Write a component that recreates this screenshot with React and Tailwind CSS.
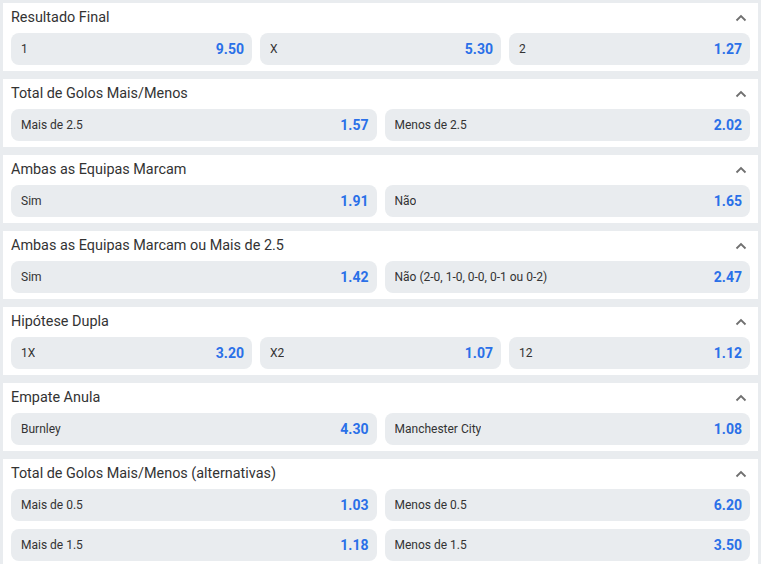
import React from "react";

const markets = [
  { title: "Resultado Final", rows: [[["1", "9.50"], ["X", "5.30"], ["2", "1.27"]]] },
  { title: "Total de Golos Mais/Menos", rows: [[["Mais de 2.5", "1.57"], ["Menos de 2.5", "2.02"]]] },
  { title: "Ambas as Equipas Marcam", rows: [[["Sim", "1.91"], ["Não", "1.65"]]] },
  { title: "Ambas as Equipas Marcam ou Mais de 2.5", rows: [[["Sim", "1.42"], ["Não (2-0, 1-0, 0-0, 0-1 ou 0-2)", "2.47"]]] },
  { title: "Hipótese Dupla", rows: [[["1X", "3.20"], ["X2", "1.07"], ["12", "1.12"]]] },
  { title: "Empate Anula", rows: [[["Burnley", "4.30"], ["Manchester City", "1.08"]]] },
  {
    title: "Total de Golos Mais/Menos (alternativas)",
    rows: [
      [["Mais de 0.5", "1.03"], ["Menos de 0.5", "6.20"]],
      [["Mais de 1.5", "1.18"], ["Menos de 1.5", "3.50"]],
    ],
  },
];

function Chevron() {
  return (
    <svg width="12" height="8" viewBox="0 0 12 8" className="mr-[3px]">
      <path d="M1.5 6.5 L6 2 L10.5 6.5" fill="none" stroke="#707070" strokeWidth="1.8" />
    </svg>
  );
}

function Odd({ label, value }) {
  return (
    <div className="flex-1 min-w-0 h-8 rounded-lg bg-[#e9ecef] flex items-center justify-between pl-[10px] pr-2">
      <span className="text-[12px] text-[#333] truncate">{label}</span>
      <span className="text-[14px] font-bold text-[#2a70e8]">{value}</span>
    </div>
  );
}

export default function App() {
  return (
    <div
      className="w-[761px] h-[564px] overflow-hidden bg-[#e9ecef] px-[3px] pt-[3px] flex flex-col gap-2"
      style={{ fontFamily: "Roboto, 'Liberation Sans', sans-serif" }}
    >
      {markets.map((m) => (
        <div key={m.title} className="bg-white px-2 pb-[6px] shrink-0">
          <div className="h-[30px] flex items-center justify-between pb-px">
            <span className="text-[14.4px] text-[#333]">{m.title}</span>
            <Chevron />
          </div>
          <div className="flex flex-col gap-2">
            {m.rows.map((r, i) => (
              <div key={i} className="flex gap-2">
                {r.map(([l, v]) => (
                  <Odd key={l} label={l} value={v} />
                ))}
              </div>
            ))}
          </div>
        </div>
      ))}
    </div>
  );
}
